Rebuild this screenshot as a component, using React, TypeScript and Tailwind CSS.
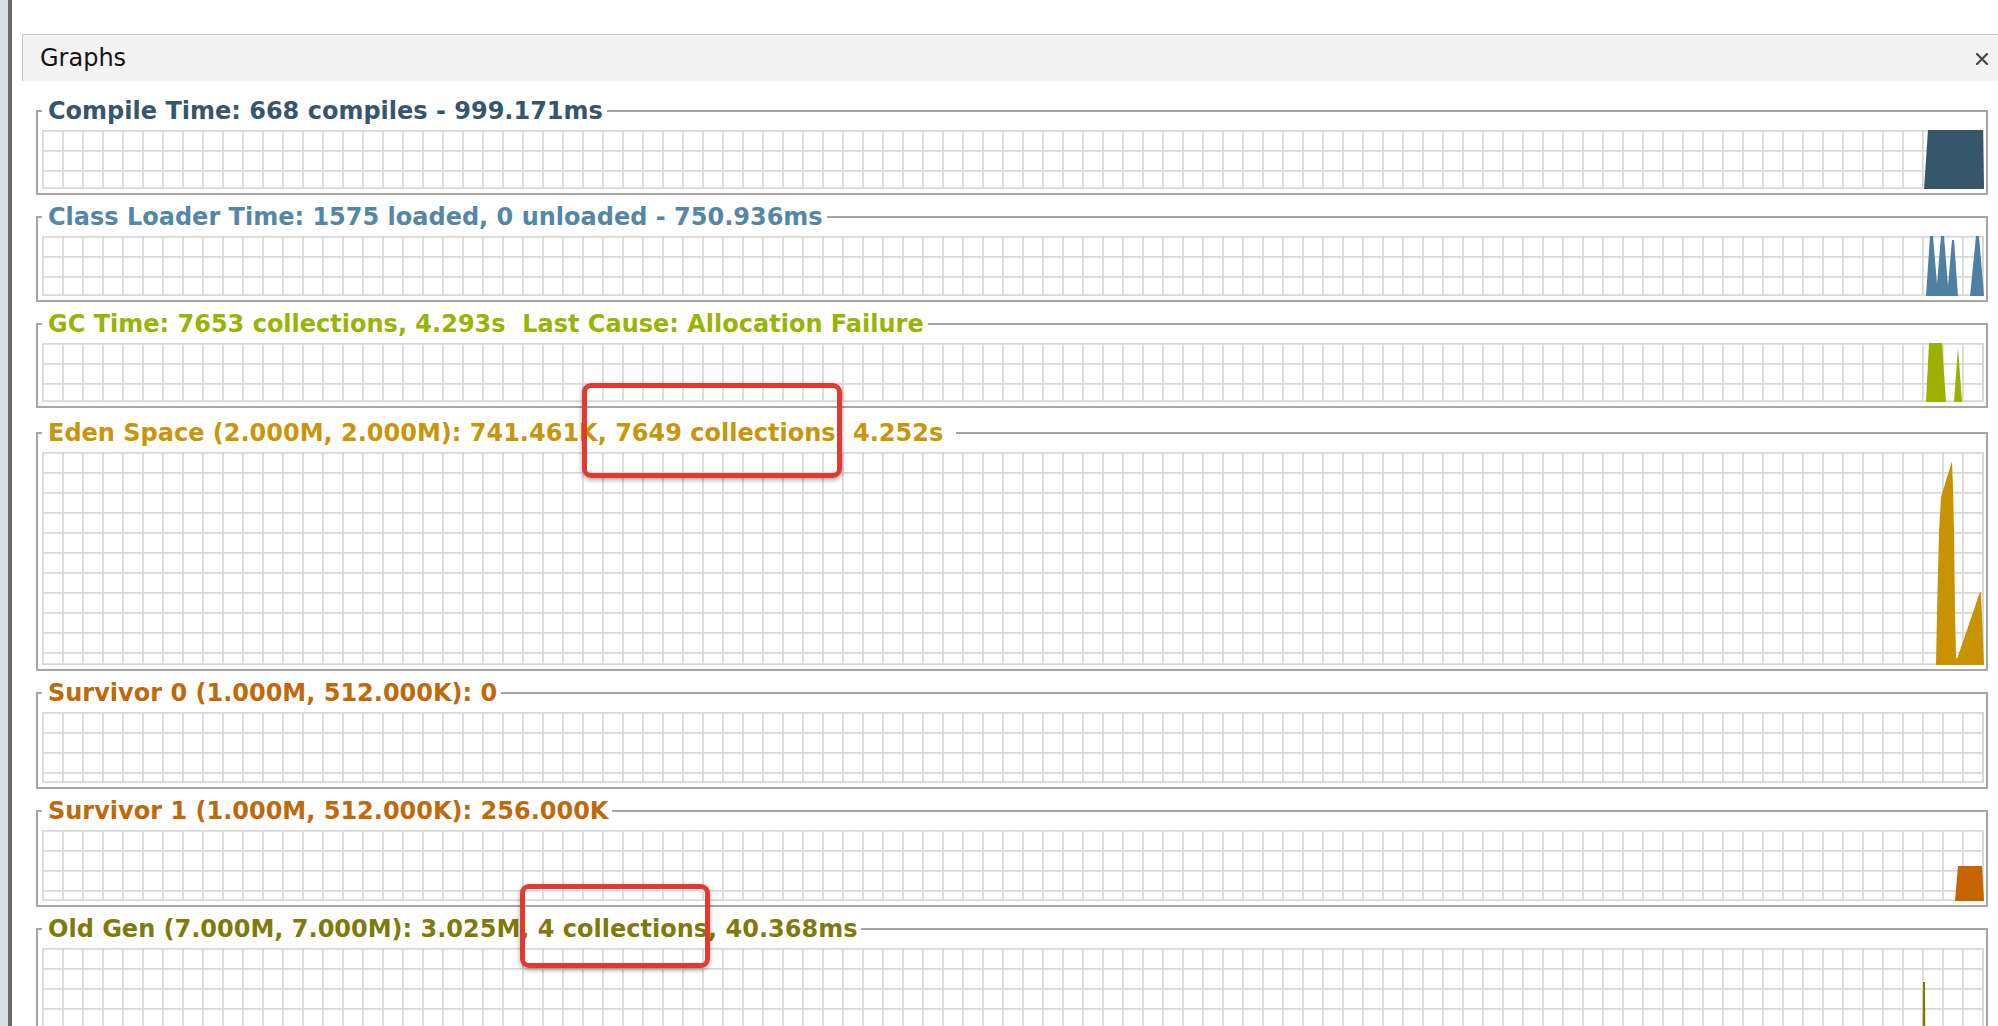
type Point = [number, number];

interface Panel {
  id: string;
  title: string;
  textClass: string;
  fill: string;
  gridHeight: number;
  gapClass: string;
  shapes: Point[][];
}

const GRID_W = 1942;

const panels: Panel[] = [
  {
    id: 'compile',
    title: 'Compile Time: 668 compiles - 999.171ms',
    textClass: 'text-[#37566c]',
    fill: '#36566c',
    gridHeight: 59,
    gapClass: 'mt-[17px]',
    shapes: [
      [[1882, 59], [1884, 30], [1886, 0], [1941, 0], [1942, 59]],
    ],
  },
  {
    id: 'classloader',
    title: 'Class Loader Time: 1575 loaded, 0 unloaded - 750.936ms',
    textClass: 'text-[#5487a6]',
    fill: '#4f80a1',
    gridHeight: 60,
    gapClass: 'mt-[9px]',
    shapes: [
      [[1884, 60], [1888, 0], [1891, 0], [1895, 48], [1899, 0], [1902, 0], [1906, 50], [1910, 4], [1912, 4], [1916, 60]],
      [[1928, 60], [1934, 0], [1937, 0], [1942, 60]],
    ],
  },
  {
    id: 'gc',
    title: 'GC Time: 7653 collections, 4.293s  Last Cause: Allocation Failure',
    textClass: 'text-[#9ab306]',
    fill: '#9bb100',
    gridHeight: 59,
    gapClass: 'mt-[9px]',
    shapes: [
      [[1884, 59], [1887, 0], [1900, 0], [1904, 59]],
      [[1912, 59], [1916, 4], [1920, 59]],
    ],
  },
  {
    id: 'eden',
    title: 'Eden Space (2.000M, 2.000M): 741.461K, 7649 collections, 4.252s ',
    textClass: 'text-[#c8950b]',
    fill: '#c89200',
    gridHeight: 213,
    gapClass: 'mt-[12px]',
    shapes: [
      [
        [1894, 213], [1895, 161], [1896, 121], [1897, 80], [1899, 45], [1910, 9], [1911, 35],
        [1912, 78], [1913, 161], [1914, 205], [1915, 207], [1938, 140], [1939, 141], [1942, 213],
      ],
    ],
  },
  {
    id: 'survivor0',
    title: 'Survivor 0 (1.000M, 512.000K): 0',
    textClass: 'text-[#c0690b]',
    fill: '#c46500',
    gridHeight: 71,
    gapClass: 'mt-[9px]',
    shapes: [],
  },
  {
    id: 'survivor1',
    title: 'Survivor 1 (1.000M, 512.000K): 256.000K',
    textClass: 'text-[#c0690b]',
    fill: '#c46500',
    gridHeight: 71,
    gapClass: 'mt-[9px]',
    shapes: [
      [[1913, 71], [1916, 36], [1940, 36], [1942, 71]],
    ],
  },
  {
    id: 'oldgen',
    title: 'Old Gen (7.000M, 7.000M): 3.025M, 4 collections, 40.368ms',
    textClass: 'text-[#7d7b0b]',
    fill: '#7e7b00',
    gridHeight: 200,
    gapClass: 'mt-[9px]',
    shapes: [
      [[1880, 200], [1881, 34], [1883, 34], [1884, 200]],
    ],
  },
];

const GraphGrid = ({ panel }: { panel: Panel }) => {
  const h = panel.gridHeight;
  return (
    <svg width={GRID_W} height={h} className="block">
      <defs>
        <pattern id={`grid-${panel.id}`} width="20" height="20" patternUnits="userSpaceOnUse">
          <path d="M20 0.9H0M0.9 0V20" stroke="#d8d8d8" strokeWidth="1.8" fill="none" />
        </pattern>
      </defs>
      <rect width={GRID_W} height={h} fill="#ffffff" />
      <rect width={GRID_W} height={h} fill={`url(#grid-${panel.id})`} />
      <path d={`M${GRID_W - 0.9} 0V${h}M0 ${h - 0.9}H${GRID_W}`} stroke="#d8d8d8" strokeWidth="1.8" />
      {panel.shapes.map((pts, i) => (
        <polygon key={i} points={pts.map((p) => p.join(',')).join(' ')} fill={panel.fill} />
      ))}
    </svg>
  );
};

export default function App() {
  return (
    <div className="relative flex h-[1026px] w-[1998px] overflow-hidden bg-white font-['DejaVu_Sans',sans-serif]">
      {/* left window edge */}
      <div className="w-[8px] shrink-0 bg-[#d7dee5]" />
      <div className="w-[4px] shrink-0 bg-[#6a6a6a]" />

      <div className="flex min-w-0 flex-1 flex-col pl-[10px] pt-[34px]">
        {/* tab header */}
        <div className="flex h-[47px] shrink-0 items-center justify-between border-l border-t border-[#c9c9c9] bg-[#f3f3f3] pl-[17px] pr-[10px]">
          <span className="text-[24px] leading-none text-[#141414]">Graphs</span>
          <svg width="12" height="12" viewBox="0 0 12 12" className="mt-[2px]">
            <path d="M1 1L11 11M11 1L1 11" stroke="#4a4a4a" strokeWidth="2.3" strokeLinecap="round" />
          </svg>
        </div>

        {/* graph panels */}
        <div className="flex flex-col pl-[14px] pr-[10px]">
          {panels.map((p) => (
            <fieldset
              key={p.id}
              className={`${p.gapClass} min-w-0 border-2 border-[#a6a6a6] pb-[4px] pl-[4px] pr-[2px] pt-[6px]`}
            >
              <legend
                className={`pl-[6px] pr-[4px] text-[24px] font-bold leading-[26px] whitespace-pre ${p.textClass}`}
              >
                {p.title}
              </legend>
              <GraphGrid panel={p} />
            </fieldset>
          ))}
        </div>
      </div>

      {/* annotation marks */}
      <div className="absolute left-[582px] top-[383px] h-[95px] w-[260px] rounded-[9px] border-[5px] border-[#e23a2e] shadow-[0_2px_5px_rgba(0,0,0,0.35)]" />
      <div className="absolute left-[520px] top-[884px] h-[84px] w-[190px] rounded-[9px] border-[5px] border-[#e23a2e] shadow-[0_2px_5px_rgba(0,0,0,0.35)]" />
    </div>
  );
}
